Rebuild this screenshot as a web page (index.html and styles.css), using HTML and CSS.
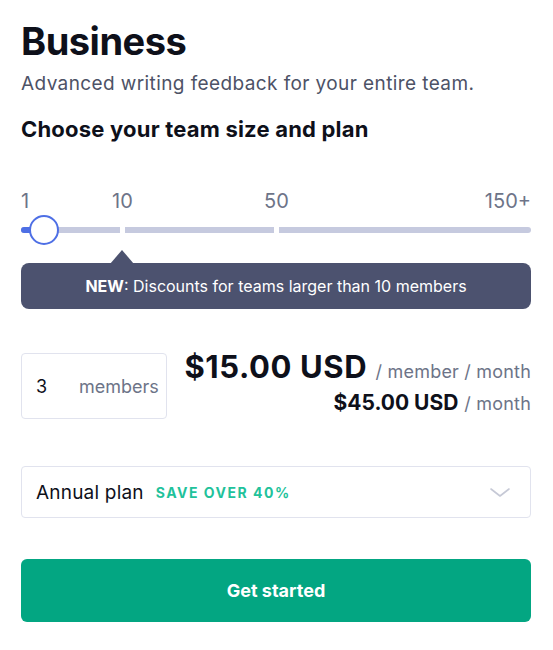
FILE: index.html
```html
<!DOCTYPE html>
<html lang="en">
<head>
<meta charset="utf-8">
<title>Business</title>
<link rel="stylesheet" href="styles.css">
</head>
<body>
<main class="page">
  <h1 class="title">Business</h1>
  <p class="subtitle">Advanced writing feedback for your entire team.</p>
  <h2 class="section">Choose your team size and plan</h2>

  <div class="slider">
    <div class="ticks">
      <span class="tick tick-start">1</span>
      <span class="tick tick-10">10</span>
      <span class="tick tick-50">50</span>
      <span class="tick tick-end">150+</span>
    </div>
    <div class="track">
      <span class="seg seg-a"></span>
      <span class="seg seg-b"></span>
      <span class="seg seg-c"></span>
      <span class="fill"></span>
      <span class="thumb"></span>
    </div>
  </div>

  <div class="tooltip">
    <span class="arrow"></span>
    <strong>NEW</strong>: Discounts for teams larger than 10 members
  </div>

  <div class="price-row">
    <div class="members-box">
      <span class="qty">3</span>
      <span class="unit">members</span>
    </div>
    <div class="price">
      <div class="price-main"><span class="amount">$15.00 USD</span> <span class="per">/ member / month</span></div>
      <div class="price-total"><span class="total">$45.00 USD</span> <span class="per">/ month</span></div>
    </div>
  </div>

  <div class="select">
    <span class="plan">Annual plan</span>
    <span class="save">SAVE OVER 40%</span>
    <svg class="chevron" width="20" height="9" viewBox="0 0 20 9" fill="none">
      <path d="M1 1 L10 8 L19 1" stroke="#c6c9d6" stroke-width="1.6" stroke-linecap="round" stroke-linejoin="round"/>
    </svg>
  </div>

  <button class="cta">Get started</button>
</main>
</body>
</html>
```
FILE: styles.css
```css
* { box-sizing: border-box; }
html, body { margin: 0; padding: 0; background: #fff; }
body { font-family: Inter, "Noto Sans", sans-serif; color: #0e101a; }

.page {
  width: 553px;
  padding: 18px 22px 0 21px;
}

.title {
  margin: 0;
  font-size: 38px;
  line-height: 46px;
  font-weight: 700;
  letter-spacing: -0.5px;
  color: #0e101a;
}

.subtitle {
  margin: 7px 0 0;
  font-size: 19px;
  line-height: 26px;
  color: #4d5266;
  letter-spacing: 0.4px;
}

.section {
  margin: 18px 0 0;
  font-size: 22px;
  line-height: 28px;
  font-weight: 700;
  letter-spacing: 0.2px;
  color: #0e101a;
}

.slider { margin-top: 46px; }

.ticks {
  position: relative;
  height: 24px;
  font-size: 20px;
  line-height: 24px;
  color: #6d7488;
}
.tick { position: absolute; top: 0; }
.tick-start { left: 0; }
.tick-10 { left: 101.5px; transform: translateX(-50%); }
.tick-50 { left: 255.5px; transform: translateX(-50%); }
.tick-end { right: 0; }

.track {
  position: relative;
  margin-top: 14px;
  height: 6px;
  display: grid;
  grid-template-columns: 99fr 149fr 252fr;
  column-gap: 5px;
}
.seg { background: #c6cadf; height: 6px; }
.seg-a { border-radius: 3px 0 0 3px; }
.seg-c { border-radius: 0 3px 3px 0; }
.fill {
  position: absolute;
  left: 0; top: 0;
  width: 24px; height: 6px;
  border-radius: 3px;
  background: #4e6fe5;
}
.thumb {
  position: absolute;
  left: 8px; top: -12px;
  width: 30px; height: 30px;
  border-radius: 50%;
  background: #fff;
  border: 2px solid #4e6fe5;
}

.tooltip {
  position: relative;
  margin-top: 30px;
  height: 46px;
  border-radius: 8px;
  background: #4c526f;
  color: #fff;
  font-size: 16px;
  line-height: 46px;
  text-align: center;
}
.tooltip strong { font-weight: 700; }
.arrow {
  position: absolute;
  top: -13px;
  left: 89px;
  width: 0; height: 0;
  border-left: 12px solid transparent;
  border-right: 12px solid transparent;
  border-bottom: 14px solid #4c526f;
}

.price-row {
  margin-top: 40px;
  display: flex;
  align-items: flex-start;
  justify-content: space-between;
}
.members-box {
  margin-top: 4px;
  width: 146px;
  height: 66px;
  border: 1px solid #e1e3ee;
  border-radius: 4px;
  display: flex;
  align-items: center;
  padding-left: 14px;
  font-size: 18px;
}
.qty { width: 43px; color: #0e101a; }
.unit { color: #6d7488; }

.price { text-align: right; }
.price-main {
  font-size: 30px;
  line-height: 36px;
  height: 36px;
  white-space: nowrap;
}
.price-main span, .price-total span { line-height: 1; }
.amount { font-size: 31px; font-weight: 700; letter-spacing: 0.6px; color: #0e101a; }
.per { font-size: 18px; color: #6d7488; letter-spacing: 0.2px; }
.price-total {
  margin-top: 4px;
  font-size: 21px;
  line-height: 28px;
  height: 28px;
  white-space: nowrap;
}
.total { font-size: 21px; font-weight: 700; color: #0e101a; }

.select {
  margin-top: 47px;
  height: 52px;
  border: 1px solid #e1e3ee;
  border-radius: 4px;
  display: flex;
  align-items: center;
  padding: 0 20px 0 14px;
}
.plan { font-size: 19px; letter-spacing: 0.2px; color: #0e101a; }
.save {
  margin-left: 12px;
  font-size: 14px;
  font-weight: 700;
  letter-spacing: 1.5px;
  color: #1fc29b;
}
.chevron { margin-left: auto; }

.cta {
  display: block;
  width: 100%;
  margin-top: 41px;
  height: 63px;
  border: 0;
  border-radius: 6px;
  background: #03a682;
  color: #fff;
  font-family: Inter, "Noto Sans", sans-serif;
  font-size: 18px;
  font-weight: 700;
}
```
